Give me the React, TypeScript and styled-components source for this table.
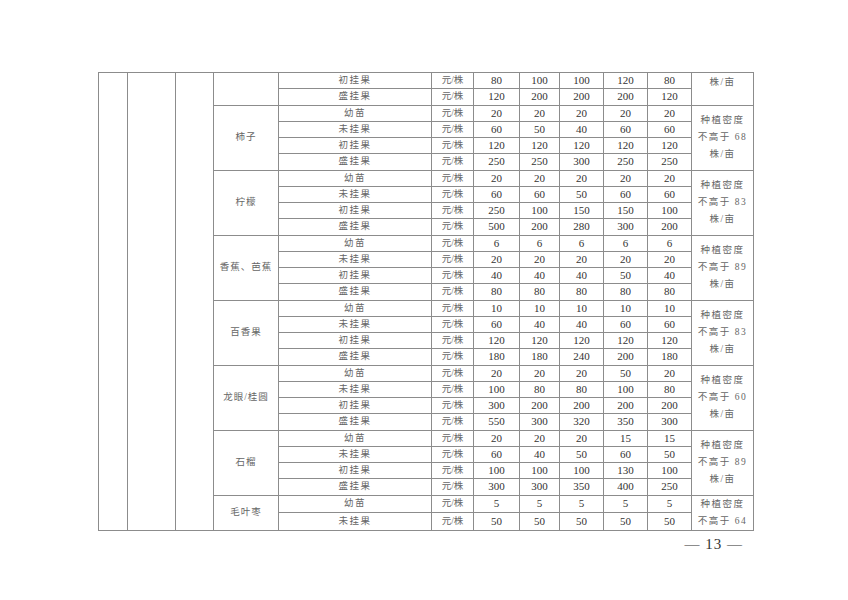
import styled, { createGlobalStyle } from "styled-components";

const GlobalStyle = createGlobalStyle`
  html, body {
    margin: 0;
    padding: 0;
    background: #fff;
  }
`;

type Group = {
  name: string;
  rows: { stage: string; values: number[] }[];
  note: string[];
  noteTop?: boolean;
};

const groups: Group[] = [
  {
    name: "",
    rows: [
      { stage: "初挂果", values: [80, 100, 100, 120, 80] },
      { stage: "盛挂果", values: [120, 200, 200, 200, 120] },
    ],
    note: ["株/亩"],
    noteTop: true,
  },
  {
    name: "柿子",
    rows: [
      { stage: "幼苗", values: [20, 20, 20, 20, 20] },
      { stage: "未挂果", values: [60, 50, 40, 60, 60] },
      { stage: "初挂果", values: [120, 120, 120, 120, 120] },
      { stage: "盛挂果", values: [250, 250, 300, 250, 250] },
    ],
    note: ["种植密度", "不高于 68", "株/亩"],
  },
  {
    name: "柠檬",
    rows: [
      { stage: "幼苗", values: [20, 20, 20, 20, 20] },
      { stage: "未挂果", values: [60, 60, 50, 60, 60] },
      { stage: "初挂果", values: [250, 100, 150, 150, 100] },
      { stage: "盛挂果", values: [500, 200, 280, 300, 200] },
    ],
    note: ["种植密度", "不高于 83", "株/亩"],
  },
  {
    name: "香蕉、芭蕉",
    rows: [
      { stage: "幼苗", values: [6, 6, 6, 6, 6] },
      { stage: "未挂果", values: [20, 20, 20, 20, 20] },
      { stage: "初挂果", values: [40, 40, 40, 50, 40] },
      { stage: "盛挂果", values: [80, 80, 80, 80, 80] },
    ],
    note: ["种植密度", "不高于 89", "株/亩"],
  },
  {
    name: "百香果",
    rows: [
      { stage: "幼苗", values: [10, 10, 10, 10, 10] },
      { stage: "未挂果", values: [60, 40, 40, 60, 60] },
      { stage: "初挂果", values: [120, 120, 120, 120, 120] },
      { stage: "盛挂果", values: [180, 180, 240, 200, 180] },
    ],
    note: ["种植密度", "不高于 83", "株/亩"],
  },
  {
    name: "龙眼/桂圆",
    rows: [
      { stage: "幼苗", values: [20, 20, 20, 50, 20] },
      { stage: "未挂果", values: [100, 80, 80, 100, 80] },
      { stage: "初挂果", values: [300, 200, 200, 200, 200] },
      { stage: "盛挂果", values: [550, 300, 320, 350, 300] },
    ],
    note: ["种植密度", "不高于 60", "株/亩"],
  },
  {
    name: "石榴",
    rows: [
      { stage: "幼苗", values: [20, 20, 20, 15, 15] },
      { stage: "未挂果", values: [60, 40, 50, 60, 50] },
      { stage: "初挂果", values: [100, 100, 100, 130, 100] },
      { stage: "盛挂果", values: [300, 300, 350, 400, 250] },
    ],
    note: ["种植密度", "不高于 89", "株/亩"],
  },
  {
    name: "毛叶枣",
    rows: [
      { stage: "幼苗", values: [5, 5, 5, 5, 5] },
      { stage: "未挂果", values: [50, 50, 50, 50, 50] },
    ],
    note: ["种植密度", "不高于 64"],
  },
];

const totalRows = groups.reduce((n, g) => n + g.rows.length, 0);

// measured column widths of the scanned table
const colWidths = [29, 48, 38, 65, 153, 42, 46, 40, 44, 44, 44, 62];

export default function App() {
  return (
    <Page>
      <GlobalStyle />
      <Sheet>
        <colgroup>
          {colWidths.map((w, i) => (
            <col key={i} style={{ width: w }} />
          ))}
        </colgroup>
        <tbody>
          {groups.map((g, gi) =>
            g.rows.map((r, ri) => (
              <tr key={`${gi}-${ri}`}>
                {gi === 0 && ri === 0 && (
                  <>
                    <Blank rowSpan={totalRows} />
                    <Blank rowSpan={totalRows} />
                    <Blank rowSpan={totalRows} />
                  </>
                )}
                {ri === 0 && <Name rowSpan={g.rows.length}>{g.name}</Name>}
                <Cjk>{r.stage}</Cjk>
                <Cjk $tight>元/株</Cjk>
                {r.values.map((v, vi) => (
                  <Num key={vi}>{v}</Num>
                ))}
                {ri === 0 && (
                  <Note rowSpan={g.rows.length} $top={g.noteTop}>
                    {g.note.map((line, li) => (
                      <NoteLine key={li}>{line}</NoteLine>
                    ))}
                  </Note>
                )}
              </tr>
            ))
          )}
        </tbody>
      </Sheet>
      <Footer>
        <PageNo>— 13 —</PageNo>
      </Footer>
    </Page>
  );
}

const Page = styled.div`
  width: 848px;
  height: 600px;
  box-sizing: border-box;
  padding: 72px 0 0 98px;
  background: #fff;
`;

const Sheet = styled.table`
  border-collapse: collapse;
  table-layout: fixed;
  width: 655px;

  td {
    border: 1px solid #8c8c8c;
    padding: 0;
    height: 15.25px;
    line-height: 15px;
    text-align: center;
    vertical-align: middle;
    overflow: hidden;
    white-space: nowrap;
  }
`;

const Blank = styled.td``;

const Cjk = styled.td<{ $tight?: boolean }>`
  font-family: "Liberation Serif", "Noto Sans CJK SC", serif;
  font-size: 9.5px;
  color: #666;
  letter-spacing: ${(p) => (p.$tight ? "0" : "1.5px")};
`;

const Name = styled(Cjk)`
  letter-spacing: 1px;
`;

const Num = styled.td`
  font-family: "Liberation Serif", serif;
  font-size: 11px;
  color: #333;
`;

const Note = styled.td<{ $top?: boolean }>`
  font-family: "Liberation Serif", "Noto Sans CJK SC", serif;
  font-size: 9.5px;
  color: #666;
  vertical-align: ${(p) => (p.$top ? "top" : "middle")} !important;
  padding-top: ${(p) => (p.$top ? "1px" : "0")} !important;
`;

const NoteLine = styled.div`
  line-height: 17px;
  letter-spacing: 1.5px;
`;

const Footer = styled.div`
  width: 655px;
  display: flex;
  justify-content: flex-end;
  padding: 5px 10px 0 0;
  box-sizing: border-box;
`;

const PageNo = styled.div`
  font-family: "Liberation Serif", serif;
  font-size: 15px;
  color: #333;
  letter-spacing: 1px;
`;
